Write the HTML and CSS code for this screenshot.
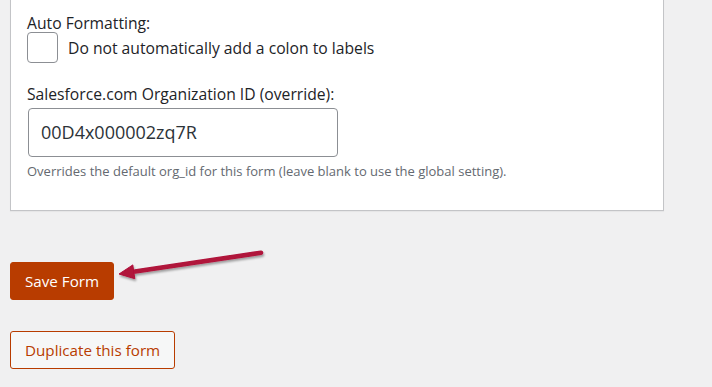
FILE: index.html
```html
<!DOCTYPE html>
<html>
<head>
<meta charset="utf-8">
<link rel="stylesheet" href="styles.css">
</head>
<body>
<div class="page">
  <div class="card">
    <div class="field">
      <div class="label">Auto Formatting:</div>
      <label class="check-row">
        <span class="checkbox"></span>
        <span class="check-text">Do not automatically add a colon to labels</span>
      </label>
    </div>
    <div class="field field-org">
      <div class="label">Salesforce.com Organization ID (override):</div>
      <div class="input">00D4x000002zq7R</div>
      <p class="desc">Overrides the default org_id for this form (leave blank to use the global setting).</p>
    </div>
  </div>
  <div class="actions">
    <div class="save-wrap">
      <button class="btn btn-primary">Save Form</button>
      <svg class="arrow" width="160" height="40" viewBox="0 0 160 40">
        <defs>
          <filter id="sh" x="-20%" y="-50%" width="140%" height="200%">
            <feDropShadow dx="1" dy="2" stdDeviation="1.2" flood-color="#000" flood-opacity="0.35"/>
          </filter>
        </defs>
        <g filter="url(#sh)">
          <line x1="147" y1="4.7" x2="21" y2="23.6" stroke="#b0123a" stroke-width="4.5" stroke-linecap="round"/>
          <polygon points="5,26 18.8,16.9 20.8,30.7" fill="#b0123a" stroke="#b0123a" stroke-width="1" stroke-linejoin="round"/>
        </g>
      </svg>
    </div>
    <button class="btn btn-secondary">Duplicate this form</button>
  </div>
</div>
</body>
</html>
```
FILE: styles.css
```css
html, body {
  margin: 0;
  padding: 0;
  background: #f0f0f1;
  font-family: "Open Sans", "Noto Sans", sans-serif;
  color: #1d2327;
}
.page {
  padding: 0 48px 0 10px;
}
.card {
  margin-top: -1px;
  background: #fff;
  border: 1px solid #c3c4c7;
  box-shadow: 0 1px 1px rgba(0,0,0,0.04);
  padding: 13px 16px 31px 16px;
}
.label {
  font-size: 15.7px;
  line-height: 20px;
  color: #1d2327;
}
.check-row {
  display: flex;
  align-items: center;
  gap: 10px;
  margin-top: -1px;
}
.checkbox {
  width: 29px;
  height: 29px;
  border: 1px solid #8c8f94;
  border-radius: 4px;
  background: #fff;
  flex: none;
}
.check-text {
  font-size: 15.7px;
}
.field-org {
  margin-top: 21px;
}
.input {
  box-sizing: border-box;
  margin-top: 4px;
  margin-left: 1px;
  width: 310px;
  height: 49px;
  border: 1px solid #8c8f94;
  border-radius: 4px;
  padding: 0 12px;
  font-size: 18px;
  line-height: 47px;
  color: #2c3338;
}
.desc {
  margin: 6px 0 0;
  font-size: 13px;
  line-height: 16px;
  color: #646970;
}
.actions {
  display: flex;
  flex-direction: column;
  align-items: flex-start;
  gap: 31px;
  padding-top: 51px;
}
.save-wrap {
  position: relative;
}
.btn {
  font-family: inherit;
  font-size: 15.2px;
  height: 38px;
  padding: 0 14px;
  border-radius: 3px;
  cursor: pointer;
}
.btn-primary {
  background: #b83c00;
  border: 1px solid #b83c00;
  color: #fff;
}
.btn-secondary {
  background: #f6f7f7;
  border: 1px solid #b83c00;
  color: #b83c00;
}
.arrow {
  position: absolute;
  left: 104px;
  top: -14px;
}
```
